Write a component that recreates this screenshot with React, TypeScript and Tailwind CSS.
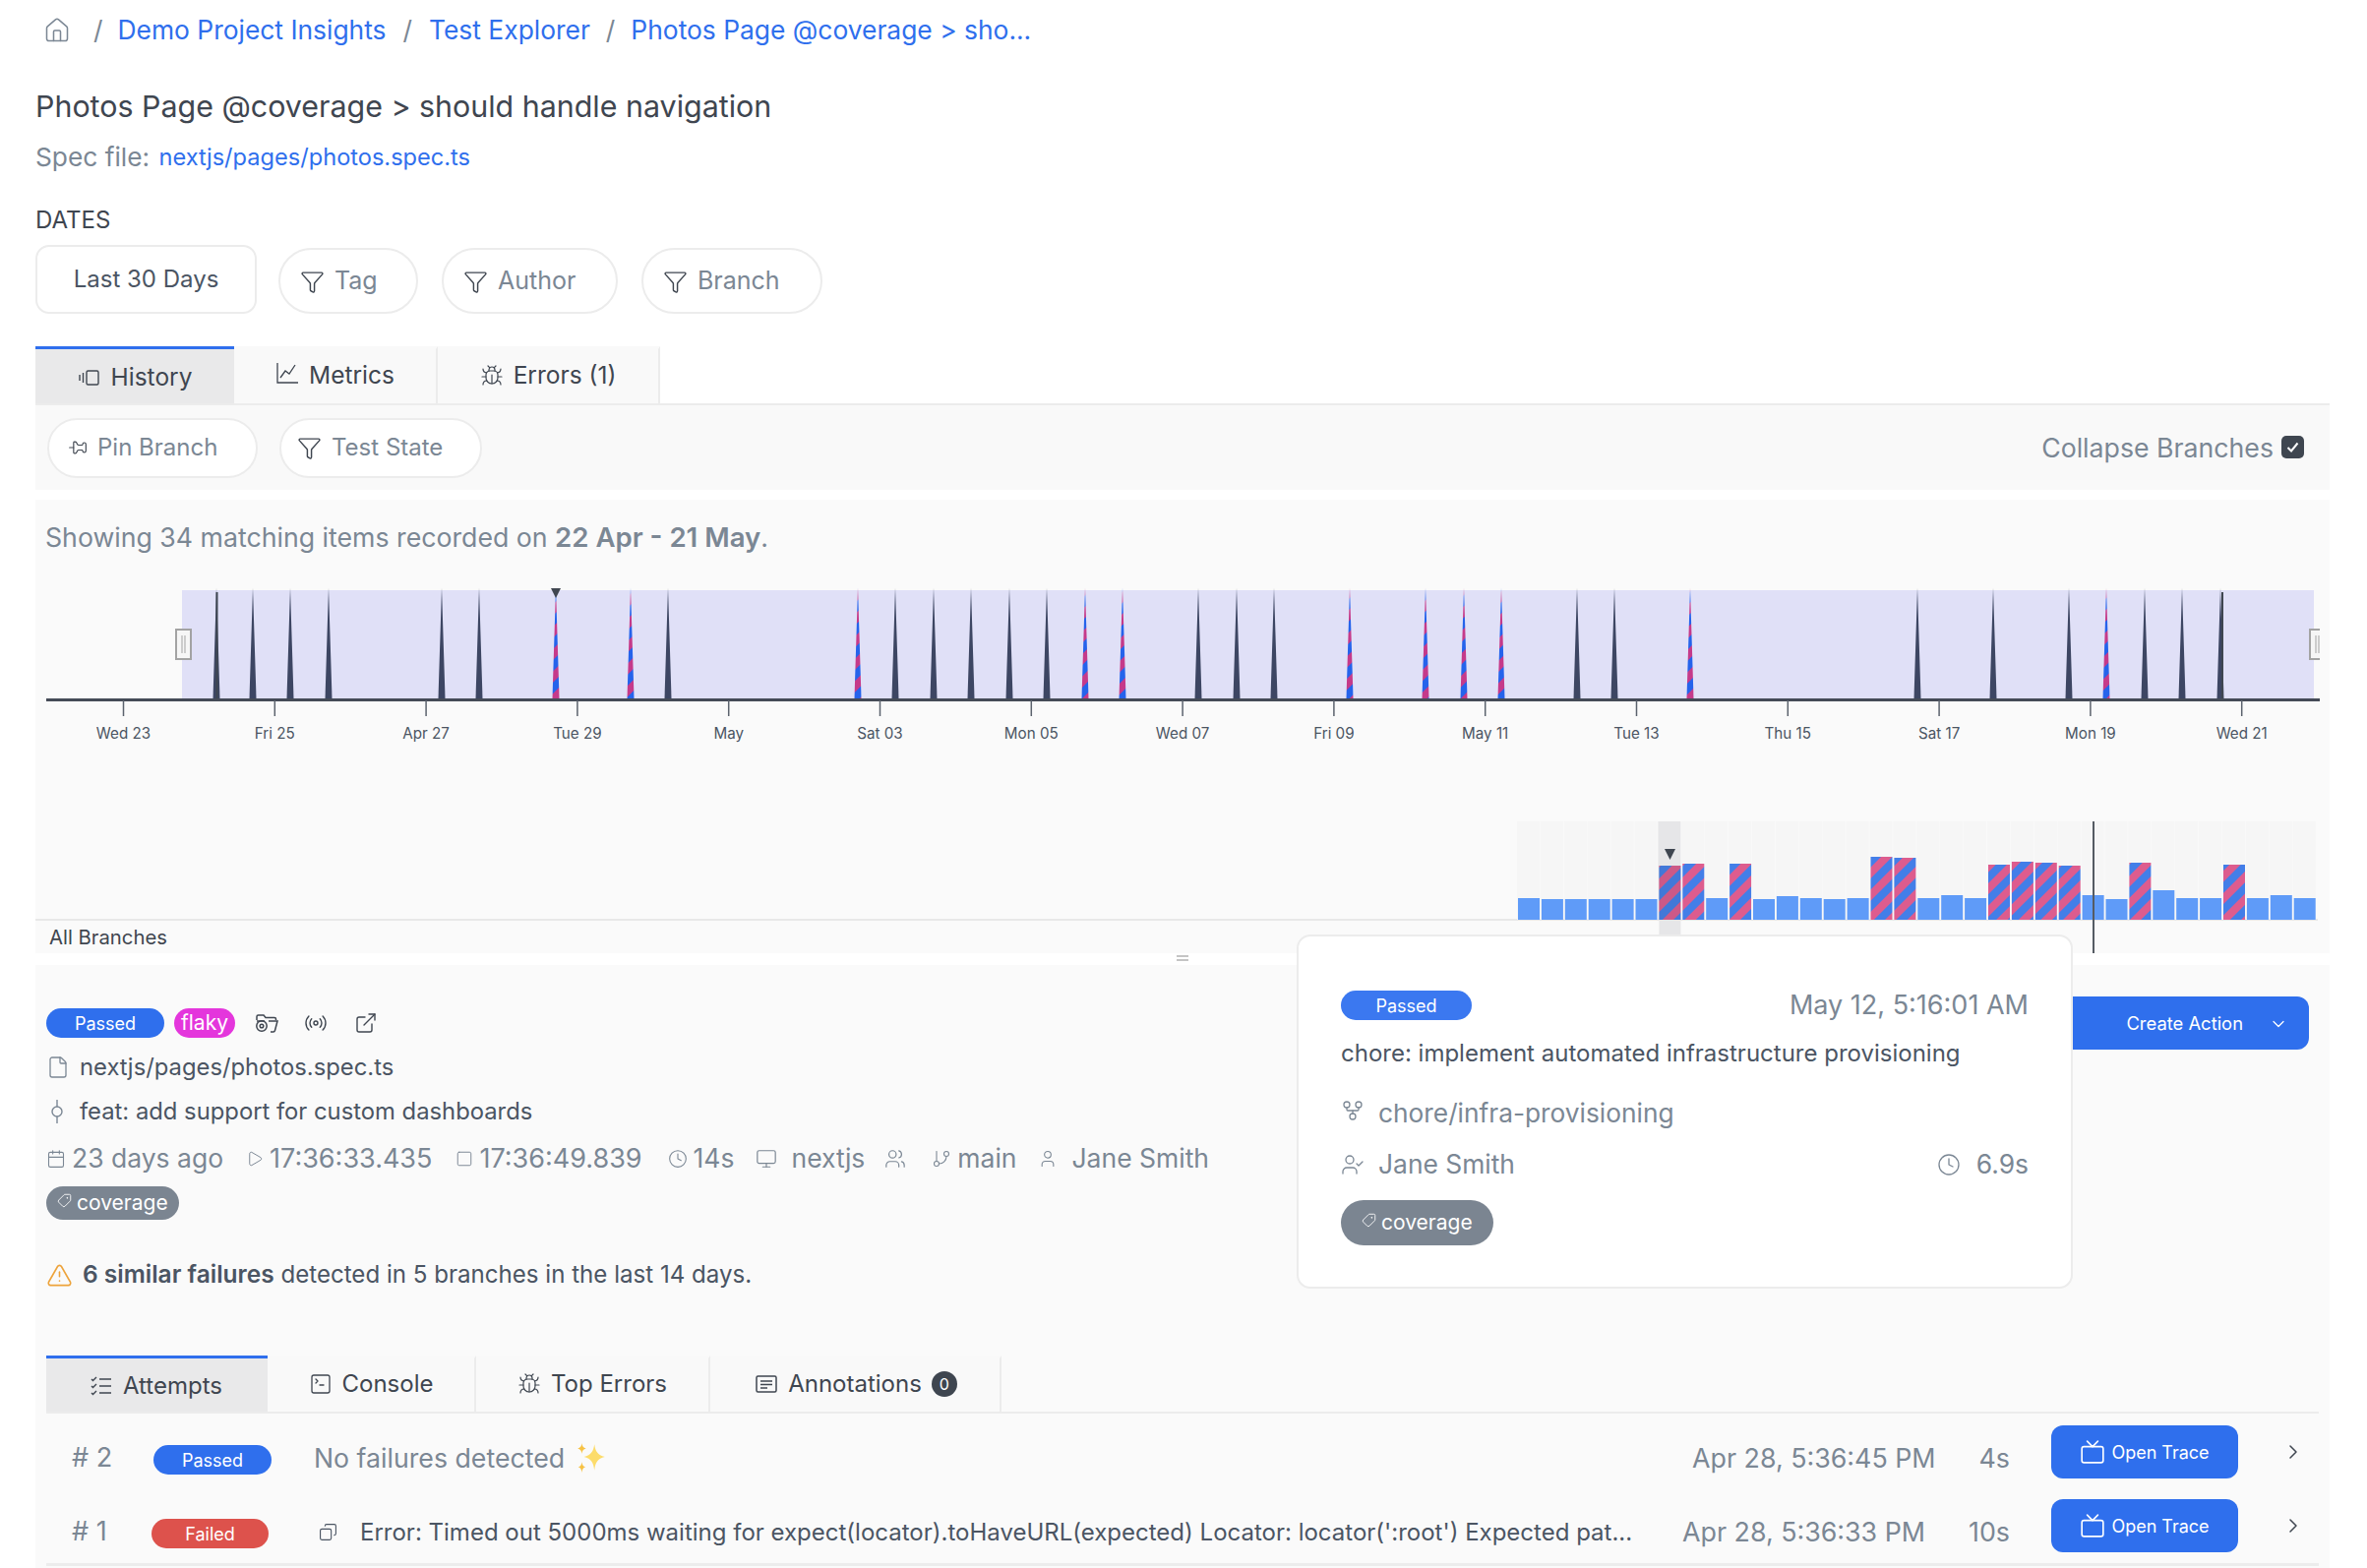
import React from 'react';
import {
  Bug,
  Calendar,
  ChevronDown,
  ChevronRight,
  Clock,
  Copy,
  ExternalLink,
  File,
  Filter,
  GitBranch,
  GitFork,
  House,
  Monitor,
  Pin,
  Play,
  Radio,
  Square,
  SquareTerminal,
  Tag,
  TriangleAlert,
  Tv,
  User,
  UserCheck,
  Users,
} from 'lucide-react';

// x positions of the timeline runs, striped ones had a flaky result
const spikes: [number, boolean][] = [
  [220, false], [257, false], [295, false], [334, false], [449, false], [487, false], [565, true], [641, true],
  [679, false], [872, true], [910, false], [949, false], [987, false], [1026, false], [1064, false], [1103, true],
  [1141, true], [1218, false], [1257, false], [1295, false], [1372, true], [1449, true], [1488, true], [1526, true],
  [1603, false], [1641, false], [1718, true], [1949, false], [2026, false], [2103, false], [2141, true], [2180, false],
  [2218, false], [2257, false],
];

const ticks = [
  'Wed 23', 'Fri 25', 'Apr 27', 'Tue 29', 'May', 'Sat 03', 'Mon 05', 'Wed 07',
  'Fri 09', 'May 11', 'Tue 13', 'Thu 15', 'Sat 17', 'Mon 19', 'Wed 21',
];

const bars: [number, boolean][] = [
  [22, false], [21, false], [21, false], [21, false], [21, false], [21, false], [55, true], [57, true], [22, false],
  [57, true], [21, false], [24, false], [22, false], [21, false], [22, false], [64, true], [63, true], [22, false],
  [25, false], [22, false], [56, true], [59, true], [58, true], [55, true], [25, false], [21, false], [58, true],
  [30, false], [22, false], [22, false], [56, true], [22, false], [25, false], [22, false],
];

const Badge = ({ label, className }: { label: string; className: string }) => (
  <span className={`flex h-[30px] items-center justify-center rounded-full text-[18px] text-white ${className}`}>{label}</span>
);

const FilterPill = ({ label, className }: { label: string; className: string }) => (
  <button className={`flex items-center gap-[10px] rounded-full border-2 border-[#ececec] bg-white text-[#7b8794] ${className}`}>
    <Filter size={25} strokeWidth={1.4} className="text-[#3f4650]" />
    {label}
  </button>
);

const Tab = ({ active, icon, label, className }: { active?: boolean; icon: React.ReactNode; label: React.ReactNode; className: string }) => (
  <div
    className={`flex items-center justify-center gap-[10px] border-t-[3px] text-[#3f4650] ${
      active ? 'border-t-[#2f6fed] bg-[#e9e9ea] pt-[2px]' : 'border-t-transparent border-r-2 border-r-[#ececec] bg-[#f9f9f9] pb-[2px]'
    } ${className}`}
  >
    {icon}
    {label}
  </div>
);

const CoverageTag = ({ className }: { className: string }) => (
  <span className={`flex w-fit items-center rounded-full bg-[#7b8591] text-white ${className}`}>
    <Tag size={15} strokeWidth={1.4} className="mr-[5px] -mt-[6px] rotate-90" />
    coverage
  </span>
);

const MetaItem = ({ icon, children, className }: { icon: React.ReactNode; children: React.ReactNode; className?: string }) => (
  <span className={`flex items-center gap-[6px] ${className ?? ''}`}>
    {icon}
    {children}
  </span>
);

const HistoryGlyph = () => (
  <svg width="24" height="20" viewBox="0 0 24 20" fill="none" stroke="currentColor" strokeWidth="1.4">
    <rect x="9" y="3" width="12" height="14" rx="1.5" />
    <path d="M5.5 5v10M2 7v6" />
  </svg>
);

const MetricsGlyph = () => (
  <svg width="24" height="24" viewBox="0 0 24 24" fill="none" stroke="currentColor" strokeWidth="1.3" className="-mt-[6px]">
    <path d="M2 2v20h21" />
    <path d="M5 17l5-7 4 3 6-9" />
  </svg>
);

const AttemptsGlyph = () => (
  <svg width="24" height="24" viewBox="0 0 24 24" fill="none" stroke="currentColor" strokeWidth="1.4">
    <path d="M10 5h12M10 12h12M10 19h12" />
    <path d="M2 5l1.500 1.500L7 3M2 12l1.500 1.500L7 10M2 19l1.500 1.500L7 17" />
  </svg>
);

const CommitGlyph = () => (
  <svg width="24" height="24" viewBox="0 0 24 24" fill="none" stroke="#7b8794" strokeWidth="1.4">
    <circle cx="11" cy="12" r="5" />
    <path d="M11 0v7M11 17v7" />
  </svg>
);

const FolderCamera = () => (
  <svg width="26" height="24" viewBox="0 0 26 24" fill="none" stroke="#3f4650" strokeWidth="1.5">
    <path d="M3 9V5.5C3 4.700 3.700 4 4.500 4H10l2 2.500h9c.8 0 1.500.7 1.500 1.500v1" />
    <path d="M15 10h9l-2.500 9.500c-.2.8-.9 1.500-1.700 1.500H17" />
    <circle cx="8" cy="15" r="5.200" />
    <circle cx="8" cy="15" r="1.800" />
    <path d="M3 10h8" />
  </svg>
);

const Sparkles = () => (
  <svg width="34" height="34" viewBox="0 0 32 32" className="ml-[10px]">
    <path d="M19 3c1 7 3 10 10 12-7 2-9 5-10 13-1-8-3-11-10-13 7-2 9-5 10-12z" fill="#fcdc6b" />
    <path d="M7 2c.4 3 1.400 4 4 5-2.600 1-3.600 2-4 5-.4-3-1.400-4-4-5 2.600-1 3.600-2 4-5z" fill="#f7c244" />
    <path d="M7 20c.4 3 1.200 4 3.500 4.800C8.200 25.600 7.400 27 7 30c-.4-3-1.200-4.400-3.500-5.200C5.800 24 6.600 23 7 20z" fill="#f7c244" />
  </svg>
);

const HistoryChart = () => (
  <svg width={2332} height={399} viewBox="36 570 2332 399" className="block">
    <defs>
      <pattern id="spike-stripes" patternUnits="userSpaceOnUse" width="16" height="16" patternTransform="rotate(45)">
        <rect width="16" height="16" fill="#2563eb" />
        <rect width="8" height="16" fill="#c53a8a" />
      </pattern>
      <pattern id="bar-stripes" patternUnits="userSpaceOnUse" width="16" height="16" patternTransform="rotate(45)">
        <rect width="16" height="16" fill="#437ee8" />
        <rect width="8" height="16" fill="#dd5c8e" />
      </pattern>
    </defs>

    {/* timeline */}
    <rect x={185} y={600} width={2167} height={110} fill="#e0e0f7" />
    {spikes.map(([x, flaky]) => (
      <polygon key={x} points={`${x - 3.5},710 ${x},597 ${x + 3.5},710`} fill={flaky ? 'url(#spike-stripes)' : '#3d4663'} />
    ))}
    <line x1={220.5} x2={220.5} y1={602} y2={710} stroke="#3f4650" strokeWidth={2} />
    <line x1={2259} x2={2259} y1={602} y2={710} stroke="#3f4650" strokeWidth={2} />
    <polygon points="560,598 570,598 565,608" fill="#3f4650" />
    <rect x={47} y={710} width={2311} height={3} fill="#454b57" />
    {ticks.map((label, i) => {
      const x = 125.5 + i * 153.8;
      return (
        <g key={label}>
          <line x1={x} x2={x} y1={712} y2={728} stroke="#5b626d" strokeWidth={1.5} />
          <text x={x} y={751} textAnchor="middle" fontSize={15.2} fill="#4b5563">
            {label}
          </text>
        </g>
      );
    })}
    <rect x={179} y={640} width={15} height={30} fill="#f6f6f6" stroke="#a3a3a3" strokeWidth={2} />
    <path d="M185 646v18M188 646v18" stroke="#a3a3a3" strokeWidth={1} />
    <path d="M2358 640h-10v30h10" fill="#f6f6f6" stroke="#a3a3a3" strokeWidth={2} />
    <path d="M2354 646v18M2357 646v18" stroke="#a3a3a3" strokeWidth={1} />

    {/* per run duration bars */}
    <rect x={36} y={934} width={2320} height={2} fill="#e8e8e8" />
    {bars.map(([h, flaky], i) => {
      const x = 1543 + i * 23.9;
      return (
        <g key={x}>
          <rect x={x - 1} y={835} width={23} height={100} fill={i === 6 ? '#e6e6e8' : '#f6f6f6'} />
          <rect x={x} y={935 - h} width={22} height={h} fill={flaky ? 'url(#bar-stripes)' : '#5f9bf8'} />
        </g>
      );
    })}
    <rect x={1686.4} y={880} width={22} height={55} fill="#3f4650" opacity={0.1} />
    <rect x={1686.4} y={936} width={22} height={33} fill="#e6e6e8" />
    <polygon points="1692,863 1703,863 1697.500,874" fill="#3f4650" />
    <line x1={2128} x2={2128} y1={835} y2={969} stroke="#555b63" strokeWidth={2} />
    <text x={50} y={960} fontSize={20.3} fill="#3f4650">
      All Branches
    </text>
  </svg>
);

const AttemptRow = ({
  num,
  badge,
  middle,
  date,
  duration,
}: {
  num: string;
  badge: React.ReactNode;
  middle: React.ReactNode;
  date: string;
  duration: string;
}) => (
  <div className="flex h-[76px] items-center">
    <span className="mt-[13px] w-[107px] pl-[26px] text-[27px] text-[#7b8794]">{num}</span>
    <div className="mt-[16px]">{badge}</div>
    {middle}
    <span className="ml-auto mt-[13px] text-[26.800px] text-[#7b8794]">{date}</span>
    <span className="ml-[44px] mt-[13px] text-[26.800px] text-[#7b8794]">{duration}</span>
    <button className="ml-[42px] flex h-[54px] w-[190px] items-center justify-center gap-[6px] rounded-[12px] bg-[#2f6fed] text-[18px] text-white">
      <Tv size={26} strokeWidth={1.5} />
      Open Trace
    </button>
    <ChevronRight size={24} strokeWidth={1.5} className="ml-[44px] mr-[14px] text-[#3f4650]" />
  </div>
);

const App: React.FC = () => {
  return (
    <div className="relative h-[1594px] w-[2406px] overflow-hidden bg-white pl-[36px] pr-[38px] font-[family-name:Inter,sans-serif]">
      <nav className="flex h-[62px] items-center text-[26.400px] text-[#2f6fed]">
        <House size={28} strokeWidth={1.3} className="ml-[8px] text-[#7b8794]" />
        <span className="ml-[23px] mr-[15px] text-[#7b8794]">/</span>
        <a>Demo Project Insights</a>
        <span className="mx-[17px] text-[#7b8794]">/</span>
        <a>Test Explorer</a>
        <span className="mx-[16px] text-[#7b8794]">/</span>
        <a>Photos Page @coverage &gt; sho...</a>
      </nav>

      <h1 className="mt-[24px] flex h-[46px] items-center text-[30.400px] text-[#3f4650]">Photos Page @coverage &gt; should handle navigation</h1>
      <p className="mt-[10px] flex h-[36px] items-center text-[26.300px] text-[#7b8794]">
        Spec file:&nbsp;<a className="ml-[2px] text-[23.600px] text-[#2f6fed]">nextjs/pages/photos.spec.ts</a>
      </p>

      <div className="mt-[31px] flex h-[30px] items-center text-[24px] text-[#3f4650]">DATES</div>
      <div className="mt-[10px] flex h-[70px] items-start text-[25px]">
        <button className="h-[70px] w-[225px] rounded-[14px] border-2 border-[#ececec] bg-white text-[24px] text-[#4b5563]">Last 30 Days</button>
        <FilterPill label="Tag" className="ml-[22px] mt-[3px] h-[67px] w-[142px] pl-[20px] pt-[1px]" />
        <FilterPill label="Author" className="ml-[24px] mt-[3px] h-[67px] w-[179px] pl-[20px] pt-[1px]" />
        <FilterPill label="Branch" className="ml-[24px] mt-[3px] h-[67px] w-[184px] pl-[20px] pt-[1px]" />
      </div>

      <div className="mt-[33px] flex h-[60px] border-b-2 border-[#ececec] text-[24.500px]">
        <Tab active icon={<HistoryGlyph />} label="History" className="w-[202px]" />
        <Tab icon={<MetricsGlyph />} label="Metrics" className="w-[207px]" />
        <Tab icon={<Bug size={24} strokeWidth={1.2} />} label="Errors (1)" className="w-[226px]" />
      </div>

      <div className="flex h-[86px] items-center justify-between bg-[#f9f9f9] pl-[12px] pr-[26px] text-[24px]">
        <div className="flex items-center gap-[22px]">
          <button className="flex h-[61px] w-[214px] items-center gap-[10px] rounded-full border-2 border-[#ececec] bg-white pl-[19px] text-[#7b8794]">
            <Pin size={20} strokeWidth={1.4} className="rotate-90 text-[#3f4650]" />
            Pin Branch
          </button>
          <FilterPill label="Test State" className="h-[61px] w-[206px] pl-[16px]" />
        </div>
        <label className="flex items-center gap-[8px] text-[26.700px] text-[#7b8794]">
          Collapse Branches
          <span className="flex h-[23px] w-[23px] items-center justify-center rounded-[5px] bg-[#3f4650]">
            <svg width="15" height="15" viewBox="0 0 15 15" fill="none" stroke="white" strokeWidth="2">
              <path d="M2.500 8l3.500 3.500 6.500-8" />
            </svg>
          </span>
        </label>
      </div>

      <section className="mt-[10px] h-[461px] bg-[#fafafa]">
        <p className="flex h-[62px] items-center pl-[10px] pt-[15px] text-[26.700px] text-[#7b8794]">
          Showing 34 matching items recorded on&nbsp;<strong className="text-[27.600px] font-semibold">22 Apr - 21 May</strong>.
        </p>
        <HistoryChart />
      </section>

      <section className="relative mt-[12px] h-[613px] bg-[#fafafa] px-[11px] pt-[32px]">
        <div className="absolute left-[1160px] top-[-10px] h-[6px] w-[12px] border-y-2 border-[#c4c4c4]" />
        <div className="flex items-start justify-between">
          <div className="pt-[12px]">
            <div className="flex h-[30px] items-center">
              <Badge label="Passed" className="w-[120px] bg-[#2f6fed]" />
              <Badge label="flaky" className="ml-[10px] w-[62px] rounded-[14px] bg-[#e436dc] text-[21px]" />
              <span className="ml-[19px]">
                <FolderCamera />
              </span>
              <Radio size={24} strokeWidth={1.4} className="ml-[25px] text-[#3f4650]" />
              <ExternalLink size={24} strokeWidth={1.4} className="ml-[27px] text-[#3f4650]" />
            </div>
            <div className="mt-[12px] flex h-[36px] items-center gap-[10px] text-[23.800px] text-[#4b5563]">
              <File size={24} strokeWidth={1.3} className="text-[#7b8794]" />
              nextjs/pages/photos.spec.ts
            </div>
            <div className="mt-[9px] flex h-[36px] items-center gap-[10px] text-[23.800px] text-[#4b5563]">
              <CommitGlyph />
              feat: add support for custom dashboards
            </div>
            <div className="mt-[10px] flex h-[40px] items-center text-[26.500px] text-[#7b8794]">
              <MetaItem icon={<Calendar size={20} strokeWidth={1.3} />}>23 days ago</MetaItem>
              <MetaItem className="ml-[23px] text-[27px]" icon={<Play size={18} strokeWidth={1.3} />}>17:36:33.435</MetaItem>
              <MetaItem className="ml-[24px] text-[27px]" icon={<Square size={18} strokeWidth={1.3} />}>17:36:49.839</MetaItem>
              <MetaItem className="ml-[26px]" icon={<Clock size={20} strokeWidth={1.3} />}>14s</MetaItem>
              <MetaItem className="ml-[22px]" icon={<Monitor size={22} strokeWidth={1.3} />}><span className="ml-[8px]">nextjs</span></MetaItem>
              <Users size={22} strokeWidth={1.3} className="ml-[20px]" />
              <MetaItem className="ml-[26px]" icon={<GitBranch size={20} strokeWidth={1.3} />}>main</MetaItem>
              <MetaItem className="ml-[22px]" icon={<User size={20} strokeWidth={1.3} />}><span className="ml-[8px]">Jane Smith</span></MetaItem>
            </div>
            <CoverageTag className="mt-[8px] h-[34px] px-[11px] text-[21px]" />
            <div className="mt-[38px] flex h-[36px] items-center gap-[10px] text-[24.100px] text-[#4b5563]">
              <TriangleAlert size={27} strokeWidth={1.4} className="text-[#eda33b]" />
              <span>
                <strong className="text-[24.500px] font-semibold">6 similar failures</strong> detected in 5 branches in the last 14 days.
              </span>
            </div>
          </div>
          <button className="mr-[10px] flex h-[54px] w-[256px] items-center justify-end rounded-[12px] bg-[#2f6fed] pr-[21px] pt-[1px] text-[18.400px] text-white">
            Create Action
            <ChevronDown size={20} strokeWidth={1.5} className="ml-[26px]" />
          </button>
        </div>

        <div className="mt-[64px] flex h-[59px] border-b-2 border-[#ececec] text-[24px]">
          <Tab active icon={<AttemptsGlyph />} label="Attempts" className="w-[225px] pr-[2px]" />
          <Tab icon={<SquareTerminal size={24} strokeWidth={1.3} />} label="Console" className="w-[212px]" />
          <Tab icon={<Bug size={24} strokeWidth={1.2} />} label="Top Errors" className="w-[238px]" />
          <Tab
            icon={<svg width="24" height="20" viewBox="0 0 24 20" fill="none" stroke="currentColor" strokeWidth="1.500"><rect x="2" y="2" width="20" height="16" rx="1.500" /><path d="M6 7h12M6 10.500h12M6 14h7" /></svg>}
            label={
              <span className="flex items-center gap-[10px]">
                Annotations
                <span className="flex h-[26px] w-[26px] items-center justify-center rounded-full bg-[#3f4650] text-[16px] text-white">0</span>
              </span>
            }
            className="w-[296px] pl-[2px]"
          />
        </div>

        <div className="mb-[-1px] mt-[1px]">
          <AttemptRow
            num="# 2"
            badge={<Badge label="Passed" className="ml-[2px] w-[120px] bg-[#2f6fed]" />}
            middle={
              <span className="ml-[43px] mt-[13px] flex items-center text-[26.700px] text-[#7b8794]">
                No failures detected
                <Sparkles />
              </span>
            }
            date="Apr 28, 5:36:45 PM"
            duration="4s"
          />
        </div>
        <div className="border-b-[3px] border-[#ececec]">
          <AttemptRow
            num="# 1"
            badge={<Badge label="Failed" className="w-[119px] bg-[#dd524c]" />}
            middle={
              <span className="ml-[51px] mt-[13px] flex items-center gap-[23px] text-[24px] text-[#4b5563]">
                <Copy size={19} strokeWidth={1.4} className="rotate-90" />
                {"Error: Timed out 5000ms waiting for expect(locator).toHaveURL(expected) Locator: locator(':root') Expected pat..."}
              </span>
            }
            date="Apr 28, 5:36:33 PM"
            duration="10s"
          />
        </div>
      </section>

      {/* run details popover, floats over the chart and the details panel */}
      <div className="absolute left-[1318px] top-[950px] h-[360px] w-[789px] rounded-[14px] border-2 border-[#ececec] bg-white px-[43px] pt-[55px]">
        <div className="flex h-[30px] items-center justify-between">
          <Badge label="Passed" className="w-[133px] bg-[#3b78f0]" />
          <span className="text-[27px] text-[#7b8794]">May 12, 5:16:01 AM</span>
        </div>
        <p className="mt-[17px] flex h-[34px] items-center text-[24px] text-[#4b5563]">chore: implement automated infrastructure provisioning</p>
        <div className="mt-[26px] flex h-[36px] items-center gap-[14px] text-[26.300px] text-[#7b8794]">
          <GitFork size={24} strokeWidth={1.3} className="-mt-[6px]" />
          chore/infra-provisioning
        </div>
        <div className="mt-[16px] flex h-[36px] items-center justify-between text-[26.400px] text-[#7b8794]">
          <span className="flex items-center gap-[14px]">
            <UserCheck size={24} strokeWidth={1.3} />
            Jane Smith
          </span>
          <span className="flex items-center gap-[16px]">
            <Clock size={24} strokeWidth={1.3} />
            6.9s
          </span>
        </div>
        <CoverageTag className="mt-[18px] h-[46px] px-[21px] text-[21px]" />
      </div>
    </div>
  );
};

export default App;
